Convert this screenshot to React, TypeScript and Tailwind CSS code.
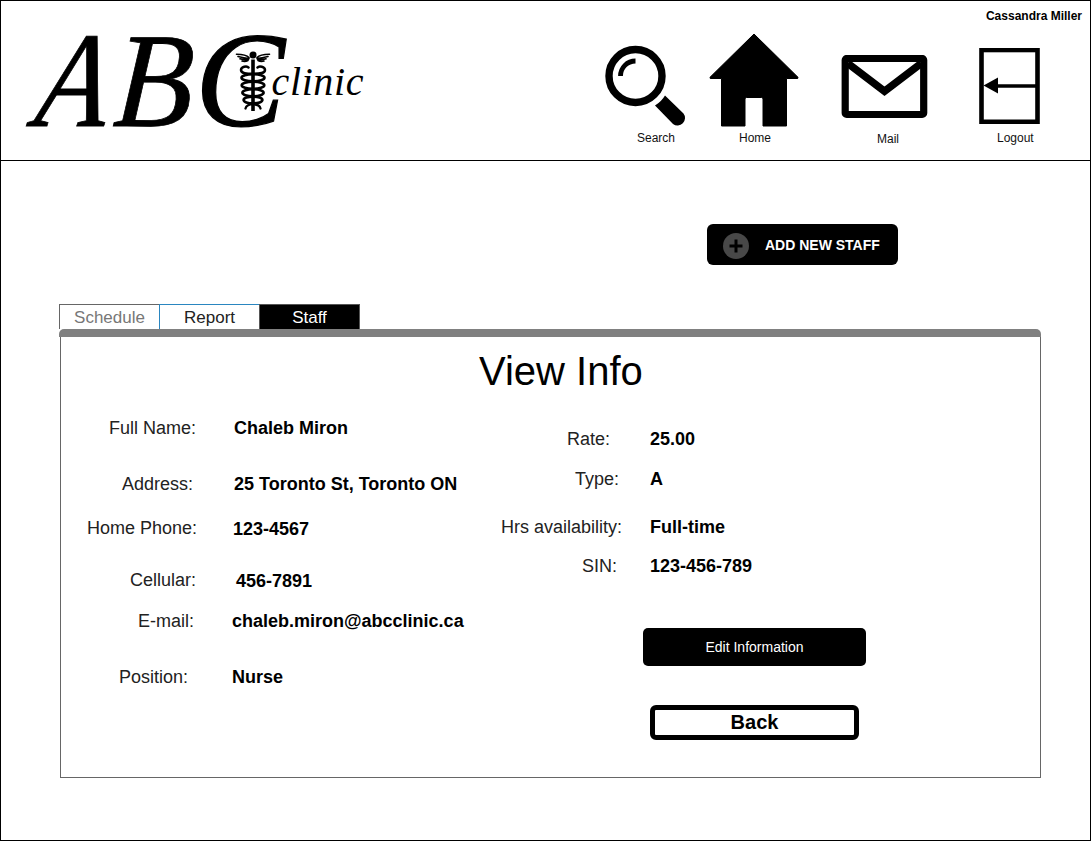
import type { ReactNode } from "react";

function Logo() {
  return (
    <svg
      className="h-[120px] w-[360px] shrink-0 overflow-visible"
      viewBox="19 19 360 120"
      fontFamily="'Liberation Serif', serif"
      fontStyle="italic"
      role="img"
    >
      <g stroke="#000" strokeWidth=".8">
        <text transform="translate(32.500 125.700) skewX(-9) scale(.86 1)" fontSize="136">A</text>
        <text transform="translate(112 125.700) skewX(-3.500) scale(.96 1)" fontSize="135">B</text>
        <text transform="translate(195 126)" fontSize="135" strokeWidth="1.200">C</text>
      </g>
      <text x="271.5" y="95" fontSize="40" textLength="92">clinic</text>
      <g fill="none" stroke="#000" strokeLinecap="round">
        <circle cx="253" cy="55" r="3.500" fill="#000" stroke="none" />
        <path d="M253 59.500V111" strokeWidth="3.600" strokeLinecap="butt" />
        <path
          d="M249 57.500Q246 54.500 236.500 54.300M249 58.500Q244 58 238 56.500M248.500 59.500Q244 60 240 58.800M248 60.500Q245 62 242 61M257 57.500Q260 54.500 269.500 54.300M257 58.500Q262 58 268 56.500M257.500 59.500Q262 60 266 58.800M258 60.500Q261 62 264 61"
          strokeWidth="1.600"
        />
        <path
          d="M248.500 67.500C247 65.500 241 66.500 241 70S246 73.800 253 73.800S265 73.500 265 70S259 65.500 257.500 67.500"
          strokeWidth="2.500"
        />
        <ellipse cx="253" cy="77.800" rx="11.500" ry="3.500" strokeWidth="2.600" />
        <ellipse cx="253" cy="85.300" rx="11.300" ry="3.500" strokeWidth="2.600" />
        <ellipse cx="253" cy="92.700" rx="10.600" ry="3.500" strokeWidth="2.600" />
        <ellipse cx="253" cy="100" rx="9.400" ry="3.400" strokeWidth="2.600" />
        <path d="M253 104.200Q246.500 104.500 245.500 108.500M253 104.200Q259.500 104.500 260.500 108.500" strokeWidth="2.300" />
      </g>
    </svg>
  );
}

function SearchIcon() {
  return (
    <svg className="h-[82px] w-[82px]" viewBox="605 45 82 82">
      <circle cx="635.5" cy="76" r="26.500" fill="#fff" stroke="#000" strokeWidth="7.400" />
      <path d="M620.500 76A15 15 0 0 1 635.500 61" fill="none" stroke="#000" strokeWidth="4.800" />
      <path d="M665 95.500L683.500 113.500A7.500 7.500 0 0 1 673 124L655 105.500Q661.500 101.500 665 95.500Z" />
    </svg>
  );
}

function HomeIcon() {
  return (
    <svg className="h-[95px] w-[91px]" viewBox="709 33.500 91 95">
      <path d="M754 34.500L798 77.800Q798.500 79 797 79H786.500V126.500H763V99.500Q763 98 761.500 98H746.500Q745 98 745 99.500V126.500H721.500V79H711Q709.500 79 710 77.800Z" stroke="#000" strokeWidth="1" strokeLinejoin="round" />
    </svg>
  );
}

function MailIcon() {
  return (
    <svg className="h-[64px] w-[88px]" viewBox="841 55 88 64" fill="none" stroke="#000">
      <rect x="845.200" y="58.500" width="78.500" height="56" rx="1.500" strokeWidth="7.200" />
      <path d="M848 63.500L884.500 91.300L921 63.500" strokeWidth="7.500" />
    </svg>
  );
}

function LogoutIcon() {
  return (
    <svg className="h-[76px] w-[61px]" viewBox="979 48 61 76">
      <rect x="981.500" y="50" width="56" height="71.800" fill="none" stroke="#000" strokeWidth="4.600" />
      <path d="M996 86H1036" stroke="#000" strokeWidth="3.600" />
      <path d="M983.500 85.500L998 77.500V93.500Z" />
    </svg>
  );
}

function NavItem({ label, box, text, children }: { label: string; box: string; text: string; children: ReactNode }) {
  return (
    <a className={"flex flex-col items-start " + box}>
      {children}
      <span className={"text-xs leading-[14px] text-[#111] " + text}>{label}</span>
    </a>
  );
}

type FieldProps = { label: string; value: string; row: string; lab: string; val: string };

function Field({ label, value, row, lab, val }: FieldProps) {
  return (
    <div className={"flex h-5 items-start whitespace-nowrap text-lg leading-5 " + row}>
      <dt className={"shrink-0 text-right text-[#222] " + lab}>{label}</dt>
      <dd className={"font-bold text-black " + val}>{value}</dd>
    </div>
  );
}

const personal: FieldProps[] = [
  { label: "Full Name:", value: "Chaleb Miron", row: "", lab: "w-[135px]", val: "ml-[38px]" },
  { label: "Address:", value: "25 Toronto St, Toronto ON", row: "mt-9", lab: "w-[132px]", val: "ml-[41px]" },
  { label: "Home Phone:", value: "123-4567", row: "mt-6", lab: "w-[136px]", val: "ml-[36px] pt-px" },
  { label: "Cellular:", value: "456-7891", row: "mt-8", lab: "w-[135px]", val: "ml-[40px] pt-px" },
  { label: "E-mail:", value: "chaleb.miron@abcclinic.ca", row: "mt-[21px]", lab: "w-[133px]", val: "ml-[38px]" },
  { label: "Position:", value: "Nurse", row: "mt-9", lab: "w-[127px]", val: "ml-[44px]" },
];

const employment: FieldProps[] = [
  { label: "Rate:", value: "25.00", row: "", lab: "w-[129px]", val: "ml-[40px]" },
  { label: "Type:", value: "A", row: "mt-5", lab: "w-[138px]", val: "ml-[31px]" },
  { label: "Hrs availability:", value: "Full-time", row: "mt-7", lab: "w-[141px]", val: "ml-[28px]" },
  { label: "SIN:", value: "123-456-789", row: "mt-[19px]", lab: "w-[136px]", val: "ml-[33px]" },
];

export default function App() {
  return (
    <div className="flex h-[841px] w-[1091px] flex-col overflow-hidden border border-black bg-white font-['Liberation_Sans',sans-serif] text-black">
      <header className="relative flex h-40 shrink-0 items-start border-b border-black">
        <div className="ml-[18px] mt-[18px]">
          <Logo />
        </div>
        <nav className="ml-[226px] flex items-start">
          <NavItem label="Search" box="mt-[44px] w-[104px]" text="mt-[4px] ml-[32px]"><SearchIcon /></NavItem>
          <NavItem label="Home" box="mt-[32px] w-[132px]" text="mt-[3px] ml-[30px]"><HomeIcon /></NavItem>
          <NavItem label="Mail" box="mt-[54px] w-[138px]" text="mt-[13px] ml-[36px]"><MailIcon /></NavItem>
          <NavItem label="Logout" box="mt-[47px] w-[61px]" text="mt-[7px] ml-[18px]"><LogoutIcon /></NavItem>
        </nav>
        <span className="absolute right-[8px] top-2 whitespace-nowrap text-xs leading-[14px] font-bold">Cassandra Miller</span>
      </header>

      <main className="flex flex-col pl-[58px]">
        <button className="mt-[63px] ml-[648px] flex h-[41px] w-[191px] items-center rounded-md bg-black text-sm font-bold text-white">
          <svg className="mt-[3px] ml-4 h-[26px] w-[26px]" viewBox="0 0 26 26">
            <circle cx="13" cy="13" r="13" fill="#484848" />
            <path d="M13 6.500V19.500M6.500 13H19.500" stroke="#000" strokeWidth="3" />
          </svg>
          <span className="ml-4 whitespace-nowrap">ADD NEW STAFF</span>
        </button>

        <div className="mt-[39px] flex h-[25px] text-[17px] leading-[25px]">
          <div className="w-[100px] border-t border-l border-[#666] text-center text-[#777]">Schedule</div>
          <div className="w-[100px] border-t border-l border-[#2a86c0] text-center text-[#222]">Report</div>
          <div className="w-[101px] border border-b-0 border-[#555] bg-black text-center text-white">Staff</div>
        </div>
        <div className="h-2 w-[982px] rounded-t-[5px] bg-[#808080]" />
        <section className="ml-px h-[441px] w-[981px] border border-t-0 border-[#666]">
          <h1 className="ml-[418px] pt-[11px] whitespace-nowrap text-[40px] leading-[46px] font-normal">View Info</h1>
          <div className="flex">
            <dl className="mt-6 w-[420px]">
              {personal.map((f) => <Field key={f.label} {...f} />)}
            </dl>
            <div className="mt-[35px] flex flex-col">
              <dl>
                {employment.map((f) => <Field key={f.label} {...f} />)}
              </dl>
              <button className="mt-[52px] ml-[162px] h-[38px] w-[223px] rounded-[5px] bg-black text-sm text-white">Edit Information</button>
              <button className="mt-[39px] ml-[169px] h-[35px] w-[209px] rounded-md border-[5px] border-black bg-white text-xl leading-[25px] font-bold">Back</button>
            </div>
          </div>
        </section>
      </main>
    </div>
  );
}
